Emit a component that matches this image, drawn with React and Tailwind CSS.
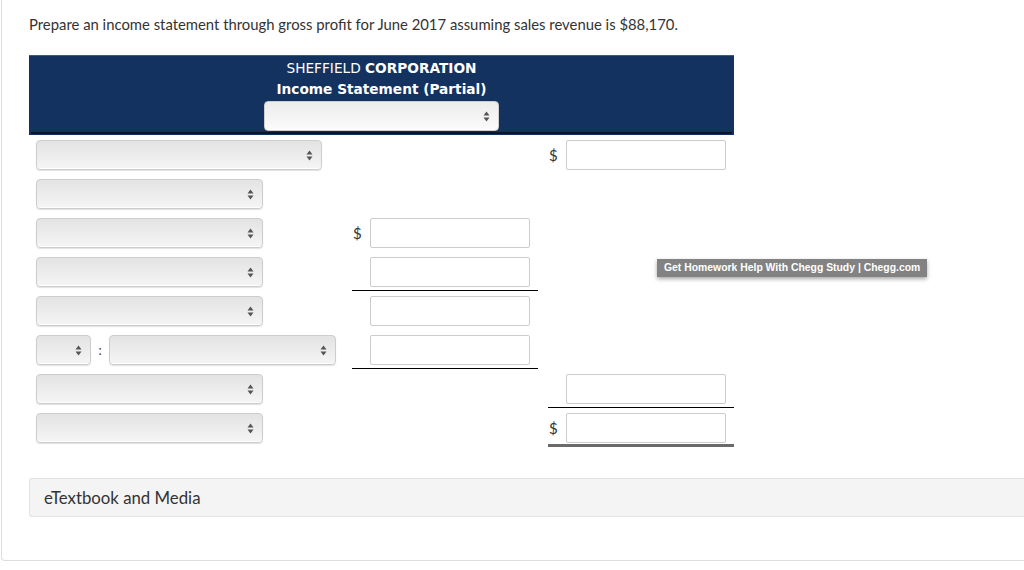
import React from 'react'

const Arrows = () => (
  <svg width="7" height="11" viewBox="0 0 7 11" className="shrink-0">
    <path d="M3.5 0.5 L6.5 4.5 L0.5 4.5 Z" fill="#555" />
    <path d="M0.5 6.5 L6.5 6.5 L3.5 10.5 Z" fill="#555" />
  </svg>
)

const Select = ({ w, light }) => (
  <div
    className={
      'h-[30px] flex items-center justify-end pr-[8px] rounded-[4px] border border-[#cdcdcd] bg-linear-to-b shadow-[inset_0_-1px_0_#fff,0_1px_1px_rgba(0,0,0,0.12)] ' +
      (light ? 'from-[#ececec] to-[#fbfbfb] ' : 'from-[#e3e3e3] to-[#f5f5f5] ') +
      w
    }
  >
    <Arrows />
  </div>
)

const Input = () => (
  <div className="w-[160px] h-[30px] bg-white border border-[#cccccc] rounded-[2px]" />
)

const Dollar = ({ show }) => (
  <span className="w-[18px] pl-[1px] text-[15px] leading-[30px] text-[#333] font-['Lato','Liberation_Sans',sans-serif]">
    {show ? '$' : ''}
  </span>
)

const rows = [
  { a: 'wide', c: '$' },
  { a: 'normal' },
  { a: 'normal', b: '$' },
  { a: 'normal', b: 'in', bLine: 'single' },
  { a: 'normal', b: 'in' },
  { a: 'pair', b: 'in', bLine: 'single' },
  { a: 'normal', c: 'in', cLine: 'single' },
  { a: 'normal', c: '$', cLine: 'double' },
]

const lineCls = (l) =>
  l === 'single'
    ? 'border-b border-black'
    : l === 'double'
    ? 'border-b-[3px] border-[#6a6a6a]'
    : ''

const App = () => {
  return (
    <div className="relative w-[1024px] h-[570px] overflow-hidden bg-white font-['Lato','Liberation_Sans',sans-serif] text-[#333]">
      <div className="ml-px w-[1080px] h-[561px] border border-t-0 border-[#dddddd] rounded-b-[4px] pl-[27px]">
        {/* Question */}
        <p className="pt-[14px] text-[14.85px] leading-[20px] text-[#333]">
          Prepare an income statement through gross profit for June 2017 assuming sales revenue is $88,170.
        </p>

        {/* Statement table */}
        <div className="w-[705px] mt-[21px]">
          <div className="h-[80px] bg-[#14325f] border-t border-[#3b5a85] flex flex-col items-center">
            <div className="pt-[2px] text-center text-white font-['DejaVu_Sans',sans-serif] text-[13.7px] leading-[21px]">
              <div>
                SHEFFIELD <span className="font-bold">CORPORATION</span>
              </div>
              <div className="font-bold">Income Statement (Partial)</div>
            </div>
            <div className="mt-[1px]">
              <Select w="w-[235px]" light />
            </div>
            <div className="mt-auto mb-[1px] h-[2px] w-[701px] bg-[#0a1628]" />
          </div>

          {rows.map((r, i) => (
            <div key={i} className="grid grid-cols-[323px_186px_10px_186px] h-[39px]">
              <div className="pl-[7px] pt-[5px] flex items-start">
                {r.a === 'wide' && <Select w="w-[286px]" />}
                {r.a === 'normal' && <Select w="w-[227px]" />}
                {r.a === 'pair' && (
                  <>
                    <Select w="w-[55px]" />
                    <span className="w-[18px] text-center text-[13px] leading-[30px] text-[#444]">:</span>
                    <Select w="w-[227px]" />
                  </>
                )}
              </div>
              <div className={'pt-[5px] flex items-start ' + lineCls(r.bLine)}>
                {r.b && (
                  <>
                    <Dollar show={r.b === '$'} />
                    <Input />
                  </>
                )}
              </div>
              <div />
              <div className={'pt-[5px] flex items-start ' + lineCls(r.cLine)}>
                {r.c && (
                  <>
                    <Dollar show={r.c === '$'} />
                    <Input />
                  </>
                )}
              </div>
            </div>
          ))}
        </div>

        {/* eTextbook */}
        <div className="mt-[31px] h-[39px] flex items-center pl-[14px] bg-[#f4f4f4] border border-r-0 border-[#e2e2e2] rounded-l-[3px] text-[16.8px] text-[#333]">
          eTextbook and Media
        </div>
      </div>

      {/* Tooltip */}
      <div className="absolute left-[657px] top-[259px] h-[18px] px-[7px] flex items-center bg-[#828282] text-white text-[10.4px] font-bold font-['Liberation_Sans',sans-serif] shadow-[0_2px_4px_rgba(0,0,0,0.35)] whitespace-nowrap">
        Get Homework Help With Chegg Study | Chegg.com
      </div>
    </div>
  )
}

export default App
